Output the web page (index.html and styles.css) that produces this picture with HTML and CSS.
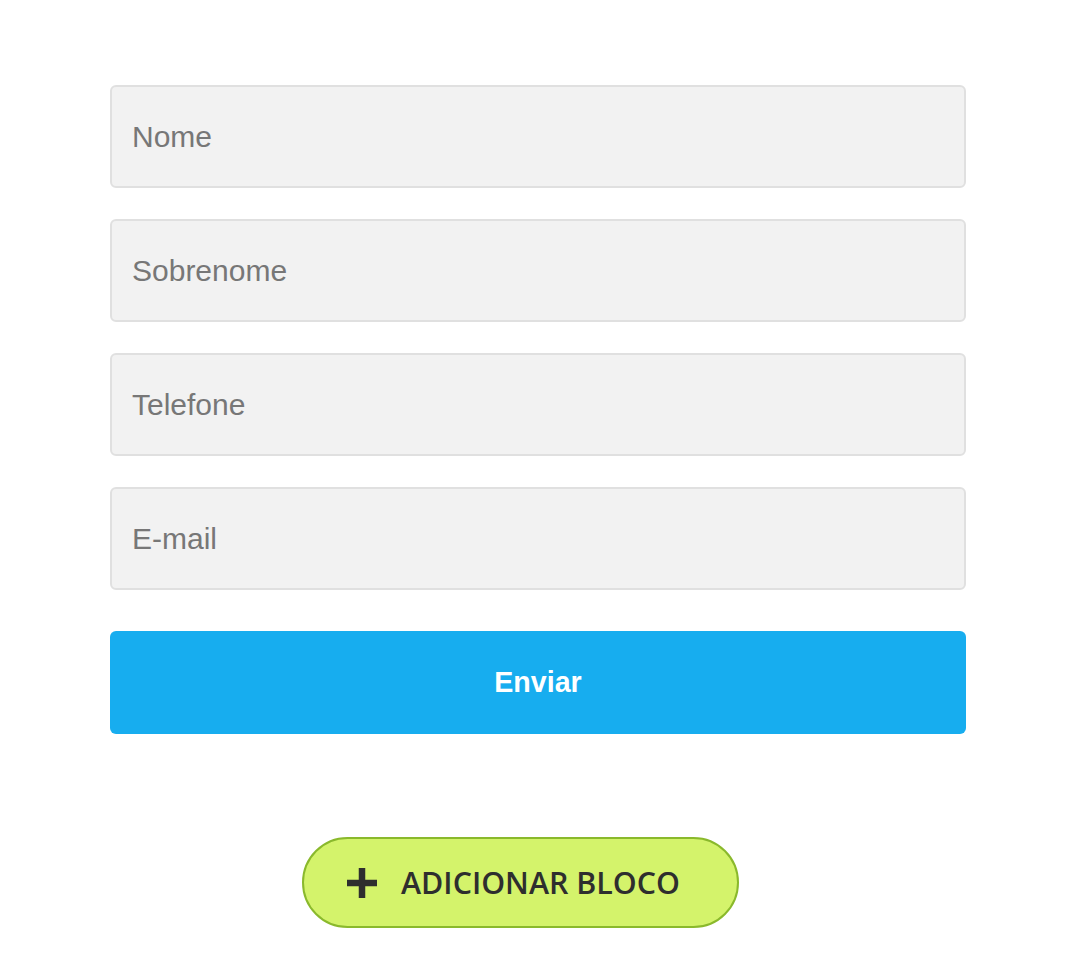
FILE: index.html
```html
<!DOCTYPE html>
<html lang="pt">
<head>
<meta charset="utf-8">
<link rel="stylesheet" href="styles.css">
</head>
<body>
<div class="page">
  <form class="form">
    <div class="field">Nome</div>
    <div class="field">Sobrenome</div>
    <div class="field">Telefone</div>
    <div class="field">E-mail</div>
    <div class="submit">Enviar</div>
  </form>
  <div class="add-row">
    <div class="add-btn">
      <svg class="plus" width="34" height="34" viewBox="0 0 34 34"><path d="M17 2V32M2 17H32" stroke="#2e2e2e" stroke-width="6.5"/></svg>
      <span class="add-label">ADICIONAR BLOCO</span>
    </div>
  </div>
</div>
</body>
</html>
```
FILE: styles.css
```css
html, body {
  margin: 0;
  padding: 0;
  background: #ffffff;
}
.page {
  width: 1072px;
  padding-top: 85px;
}
.form {
  margin-left: 110px;
  width: 856px;
  display: flex;
  flex-direction: column;
  gap: 31px;
}
.field {
  box-sizing: border-box;
  height: 103px;
  background: #f2f2f2;
  border: 2px solid #e0e0e0;
  border-radius: 6px;
  padding-left: 20px;
  display: flex;
  align-items: center;
  font-family: "Liberation Sans", Arial, sans-serif;
  font-size: 30px;
  color: #777777;
}
.submit {
  box-sizing: border-box;
  height: 103px;
  margin-top: 10px;
  background: #17adef;
  border-radius: 6px;
  display: flex;
  align-items: center;
  justify-content: center;
  font-family: "Liberation Sans", Arial, sans-serif;
  font-weight: bold;
  font-size: 28.6px;
  color: #ffffff;
}
.add-row {
  margin-top: 103px;
  padding-left: 302px;
}
.add-btn {
  box-sizing: border-box;
  width: 437px;
  height: 91px;
  background: #d4f36b;
  border: 2px solid #8ab92c;
  border-radius: 46px;
  display: flex;
  align-items: center;
  padding-left: 41px;
  gap: 22px;
}
.plus {
  display: block;
}
.add-label {
  font-family: "Open Sans", sans-serif;
  font-weight: 600;
  font-size: 30.4px;
  color: #2e2e2e;
}
```
